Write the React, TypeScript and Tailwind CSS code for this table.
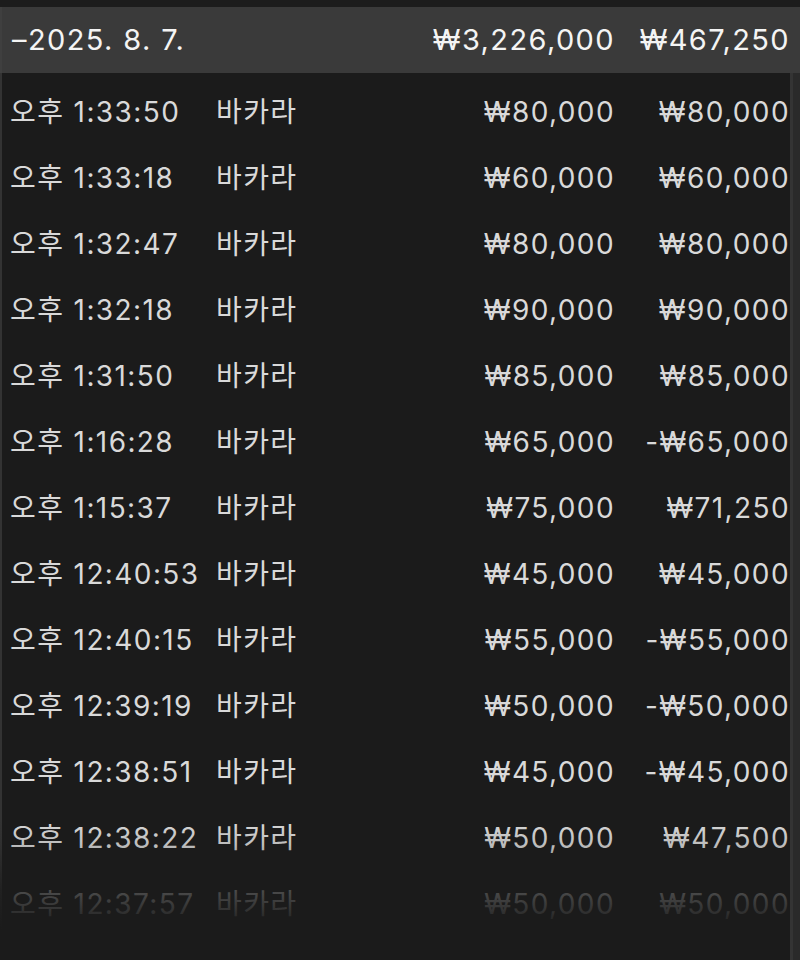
import React from 'react'

type Row = { time: string; game: string; bet: string; result: string }

const rows: Row[] = [
  { time: '오후 1:33:50', game: '바카라', bet: '₩80,000', result: '₩80,000' },
  { time: '오후 1:33:18', game: '바카라', bet: '₩60,000', result: '₩60,000' },
  { time: '오후 1:32:47', game: '바카라', bet: '₩80,000', result: '₩80,000' },
  { time: '오후 1:32:18', game: '바카라', bet: '₩90,000', result: '₩90,000' },
  { time: '오후 1:31:50', game: '바카라', bet: '₩85,000', result: '₩85,000' },
  { time: '오후 1:16:28', game: '바카라', bet: '₩65,000', result: '-₩65,000' },
  { time: '오후 1:15:37', game: '바카라', bet: '₩75,000', result: '₩71,250' },
  { time: '오후 12:40:53', game: '바카라', bet: '₩45,000', result: '₩45,000' },
  { time: '오후 12:40:15', game: '바카라', bet: '₩55,000', result: '-₩55,000' },
  { time: '오후 12:39:19', game: '바카라', bet: '₩50,000', result: '-₩50,000' },
  { time: '오후 12:38:51', game: '바카라', bet: '₩45,000', result: '-₩45,000' },
  { time: '오후 12:38:22', game: '바카라', bet: '₩50,000', result: '₩47,500' },
  { time: '오후 12:37:57', game: '바카라', bet: '₩50,000', result: '₩50,000' },
]

const font = "font-['Inter','Noto_Sans_CJK_KR',sans-serif]"

export default function App() {
  return (
    <div className={`relative h-[960px] w-[800px] overflow-hidden bg-[#1b1b1b] ${font}`}>
      <div className="h-[7px] bg-[#1c1c1c]" />
      <div className="flex h-[66px] items-center border-l-2 border-[#3f3f3f] bg-[#3a3a3a] pr-[10px] text-[29px] tracking-[1.4px] text-[#f4f4f4]">
        <div className="flex-1 pl-[10px]">–2025. 8. 7.</div>
        <div className="text-right">₩3,226,000</div>
        <div className="w-[175px] text-right">₩467,250</div>
      </div>
      <div className="flex h-[887px] border-l-2 border-[#333]">
        <div className="flex-1 pt-[6px] text-[28px] tracking-[1.4px] text-[#d9d9d9]">
          {rows.map((r) => (
            <div key={r.time} className="flex h-[66px] items-center">
              <div className="w-[214px] pl-[8px]">{r.time}</div>
              <div className="flex-1">{r.game}</div>
              <div className="text-right">{r.bet}</div>
              <div className="w-[175px] text-right">{r.result}</div>
            </div>
          ))}
        </div>
        <div className="w-[10px] border-l-[3px] border-[#343434] bg-[#2a2a2a]" />
      </div>
      {/* fade-out of the list at the bottom */}
      <div className="pointer-events-none absolute bottom-0 left-0 h-[140px] w-[789px] bg-[linear-gradient(to_bottom,rgba(27,27,27,0)_0px,rgba(27,27,27,0.15)_25px,rgba(27,27,27,0.75)_70px,#1b1b1b_110px)]" />
    </div>
  )
}
